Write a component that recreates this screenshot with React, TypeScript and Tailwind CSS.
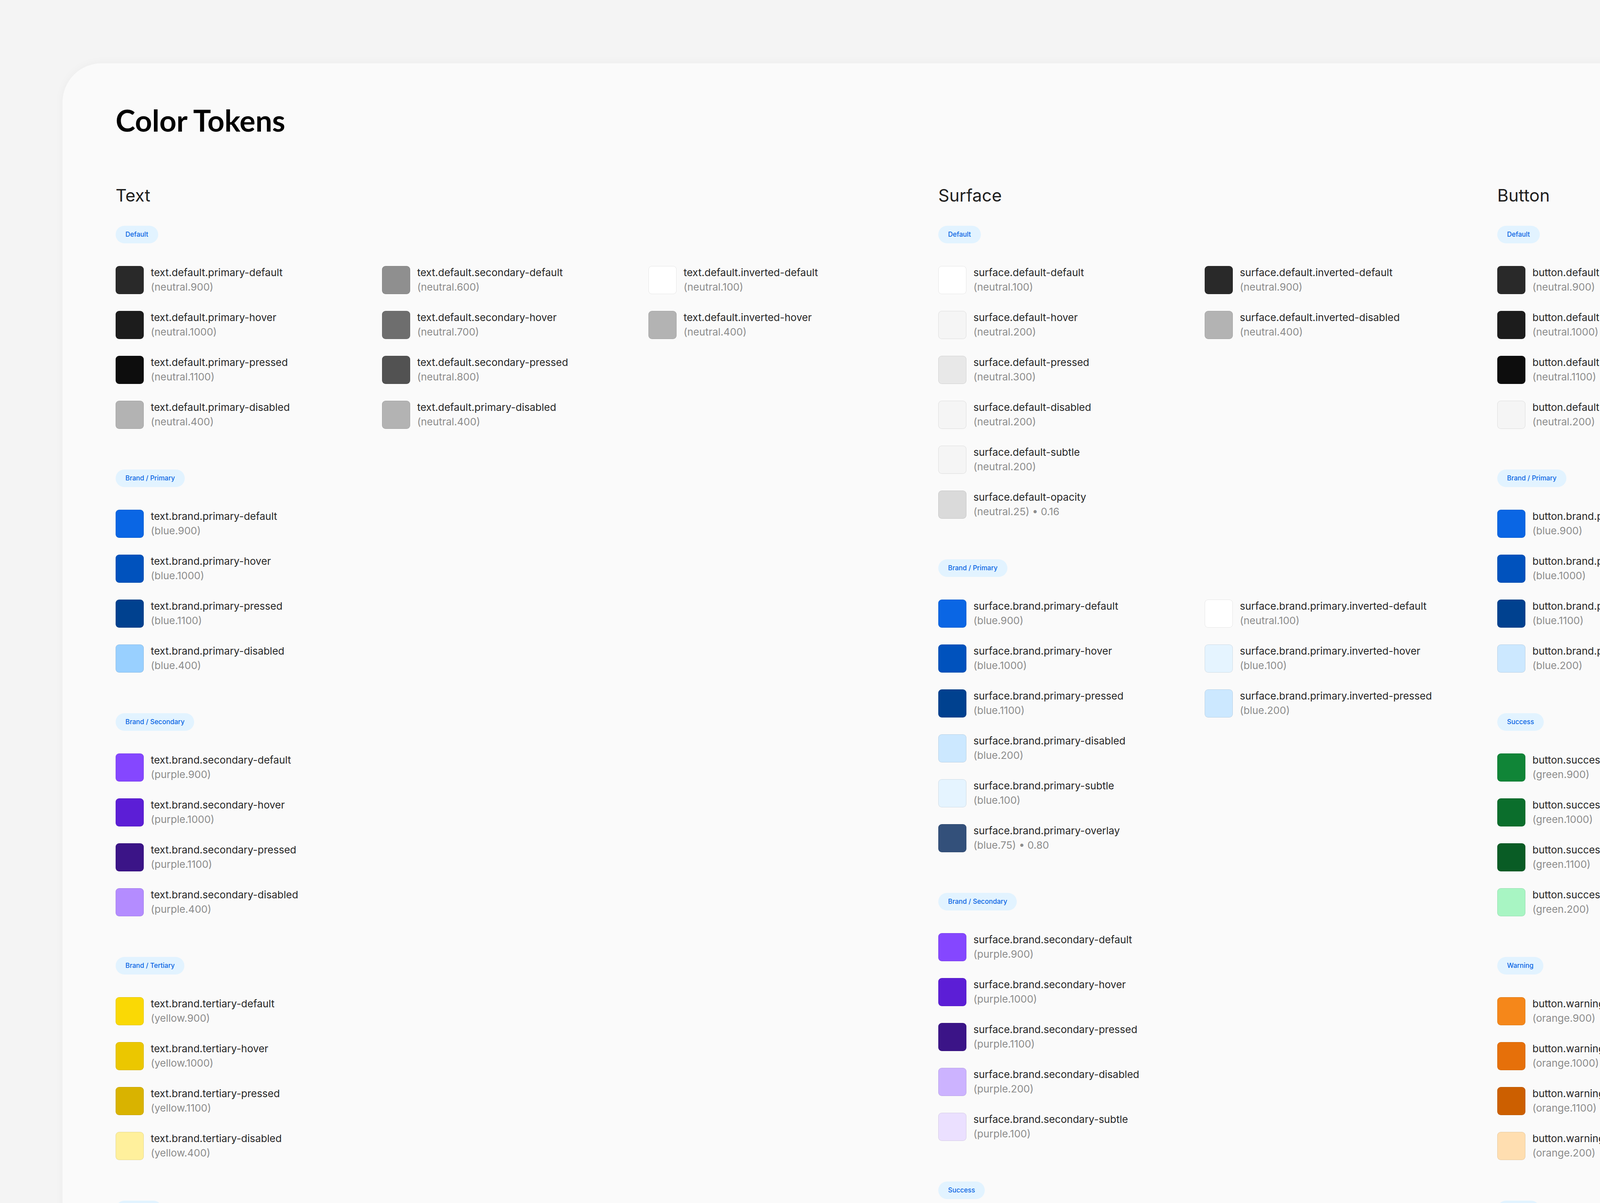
import React from "react";

type Tok = [string, string, string];
type Group = { badge: string; cols: Tok[][] };

const textGroups: Group[] = [
  {
    badge: "Default",
    cols: [
      [
        ["text.default.primary-default", "(neutral.900)", "#292929"],
        ["text.default.primary-hover", "(neutral.1000)", "#1c1c1c"],
        ["text.default.primary-pressed", "(neutral.1100)", "#0d0d0d"],
        ["text.default.primary-disabled", "(neutral.400)", "#b3b3b3"],
      ],
      [
        ["text.default.secondary-default", "(neutral.600)", "#8f8f8f"],
        ["text.default.secondary-hover", "(neutral.700)", "#6e6e6e"],
        ["text.default.secondary-pressed", "(neutral.800)", "#525252"],
        ["text.default.primary-disabled", "(neutral.400)", "#b3b3b3"],
      ],
      [
        ["text.default.inverted-default", "(neutral.100)", "#ffffff"],
        ["text.default.inverted-hover", "(neutral.400)", "#b3b3b3"],
      ],
    ],
  },
  {
    badge: "Brand / Primary",
    cols: [
      [
        ["text.brand.primary-default", "(blue.900)", "#0a66e4"],
        ["text.brand.primary-hover", "(blue.1000)", "#0052bd"],
        ["text.brand.primary-pressed", "(blue.1100)", "#00418f"],
        ["text.brand.primary-disabled", "(blue.400)", "#99d0ff"],
      ],
    ],
  },
  {
    badge: "Brand / Secondary",
    cols: [
      [
        ["text.brand.secondary-default", "(purple.900)", "#8547ff"],
        ["text.brand.secondary-hover", "(purple.1000)", "#5c1ed6"],
        ["text.brand.secondary-pressed", "(purple.1100)", "#3b1487"],
        ["text.brand.secondary-disabled", "(purple.400)", "#b48cff"],
      ],
    ],
  },
  {
    badge: "Brand / Tertiary",
    cols: [
      [
        ["text.brand.tertiary-default", "(yellow.900)", "#fad905"],
        ["text.brand.tertiary-hover", "(yellow.1000)", "#ebc700"],
        ["text.brand.tertiary-pressed", "(yellow.1100)", "#d9b300"],
        ["text.brand.tertiary-disabled", "(yellow.400)", "#fff09c"],
      ],
    ],
  },
  { badge: "Success", cols: [] },
];

const surfaceGroups: Group[] = [
  {
    badge: "Default",
    cols: [
      [
        ["surface.default-default", "(neutral.100)", "#ffffff"],
        ["surface.default-hover", "(neutral.200)", "#f5f5f5"],
        ["surface.default-pressed", "(neutral.300)", "#e8e8e8"],
        ["surface.default-disabled", "(neutral.200)", "#f5f5f5"],
        ["surface.default-subtle", "(neutral.200)", "#f5f5f5"],
        ["surface.default-opacity", "(neutral.25) • 0.16", "#dadada"],
      ],
      [
        ["surface.default.inverted-default", "(neutral.900)", "#292929"],
        ["surface.default.inverted-disabled", "(neutral.400)", "#b3b3b3"],
      ],
    ],
  },
  {
    badge: "Brand / Primary",
    cols: [
      [
        ["surface.brand.primary-default", "(blue.900)", "#0a66e4"],
        ["surface.brand.primary-hover", "(blue.1000)", "#0052bd"],
        ["surface.brand.primary-pressed", "(blue.1100)", "#00418f"],
        ["surface.brand.primary-disabled", "(blue.200)", "#cce8ff"],
        ["surface.brand.primary-subtle", "(blue.100)", "#e5f4ff"],
        ["surface.brand.primary-overlay", "(blue.75) • 0.80", "#33507a"],
      ],
      [
        ["surface.brand.primary.inverted-default", "(neutral.100)", "#ffffff"],
        ["surface.brand.primary.inverted-hover", "(blue.100)", "#e5f4ff"],
        ["surface.brand.primary.inverted-pressed", "(blue.200)", "#cce8ff"],
      ],
    ],
  },
  {
    badge: "Brand / Secondary",
    cols: [
      [
        ["surface.brand.secondary-default", "(purple.900)", "#8547ff"],
        ["surface.brand.secondary-hover", "(purple.1000)", "#5c1ed6"],
        ["surface.brand.secondary-pressed", "(purple.1100)", "#3b1487"],
        ["surface.brand.secondary-disabled", "(purple.200)", "#ccb3ff"],
        ["surface.brand.secondary-subtle", "(purple.100)", "#ebe0ff"],
      ],
    ],
  },
  { badge: "Success", cols: [] },
];

const buttonGroups: Group[] = [
  {
    badge: "Default",
    cols: [
      [
        ["button.default.primary-default", "(neutral.900)", "#292929"],
        ["button.default.primary-hover", "(neutral.1000)", "#1c1c1c"],
        ["button.default.primary-pressed", "(neutral.1100)", "#0d0d0d"],
        ["button.default.primary-disabled", "(neutral.200)", "#f5f5f5"],
      ],
    ],
  },
  {
    badge: "Brand / Primary",
    cols: [
      [
        ["button.brand.primary-default", "(blue.900)", "#0a66e4"],
        ["button.brand.primary-hover", "(blue.1000)", "#0052bd"],
        ["button.brand.primary-pressed", "(blue.1100)", "#00418f"],
        ["button.brand.primary-disabled", "(blue.200)", "#cce8ff"],
      ],
    ],
  },
  {
    badge: "Success",
    cols: [
      [
        ["button.success-default", "(green.900)", "#108537"],
        ["button.success-hover", "(green.1000)", "#0b6e2c"],
        ["button.success-pressed", "(green.1100)", "#095c25"],
        ["button.success-disabled", "(green.200)", "#a8f5c3"],
      ],
    ],
  },
  {
    badge: "Warning",
    cols: [
      [
        ["button.warning-default", "(orange.900)", "#f5871a"],
        ["button.warning-hover", "(orange.1000)", "#e6700a"],
        ["button.warning-pressed", "(orange.1100)", "#cc5f00"],
        ["button.warning-disabled", "(orange.200)", "#ffdeb0"],
      ],
    ],
  },
  { badge: "Danger", cols: [] },
];

function Row({ t }: { t: Tok }) {
  return (
    <div className="flex items-start gap-[18px]">
      <div
        className="w-[72px] h-[72px] rounded-[9px] border border-black/10 shrink-0"
        style={{ backgroundColor: t[2] }}
      />
      <div className="text-[26px] leading-[37px] -mt-[2px] whitespace-nowrap">
        <div className="text-[#262626]">{t[0]}</div>
        <div className="text-[#8c8c8c]">{t[1]}</div>
      </div>
    </div>
  );
}

function GroupView({ g }: { g: Group }) {
  return (
    <div className="flex flex-col">
      <div className="self-start h-[45px] px-[25px] rounded-full bg-[#e2f3ff] text-[#0a66e4] text-[17px] font-medium flex items-center">
        {g.badge}
      </div>
      {g.cols.length > 0 && (
        <div className="flex mt-[58px]">
          {g.cols.map((c, i) => (
            <div key={i} className="w-[682px] shrink-0 flex flex-col gap-[43px]">
              {c.map((t, j) => (
                <Row key={j} t={t} />
              ))}
            </div>
          ))}
        </div>
      )}
    </div>
  );
}

function Section({ title, groups, w }: { title: string; groups: Group[]; w: string }) {
  return (
    <div className={`${w} shrink-0 flex flex-col`}>
      <h2 className="text-[44px] leading-[53px] text-[#1f1f1f] font-normal">{title}</h2>
      <div className="mt-[51px] flex flex-col gap-[104px]">
        {groups.map((g, i) => (
          <GroupView key={i} g={g} />
        ))}
      </div>
    </div>
  );
}

export default function App() {
  return (
    <div
      className="w-[4108px] h-[3080px] overflow-hidden bg-[#f4f4f4] relative"
      style={{ fontFamily: "Inter, 'Noto Sans', sans-serif" }}
    >
      <div className="ml-[160px] mt-[162px] w-[4200px] h-[3200px] bg-[#fafafa] rounded-tl-[100px] shadow-[0_0_24px_rgba(0,0,0,0.04)] pl-[136px] pt-[108px]">
        <h1
          className="text-[76px] leading-none font-bold text-black"
          style={{ fontFamily: "Lato, 'Open Sans', sans-serif" }}
        >
          Color Tokens
        </h1>
        <div className="flex mt-[128px]">
          <Section title="Text" groups={textGroups} w="w-[2106px]" />
          <Section title="Surface" groups={surfaceGroups} w="w-[1431px]" />
          <Section title="Button" groups={buttonGroups} w="w-[700px]" />
        </div>
      </div>
    </div>
  );
}
